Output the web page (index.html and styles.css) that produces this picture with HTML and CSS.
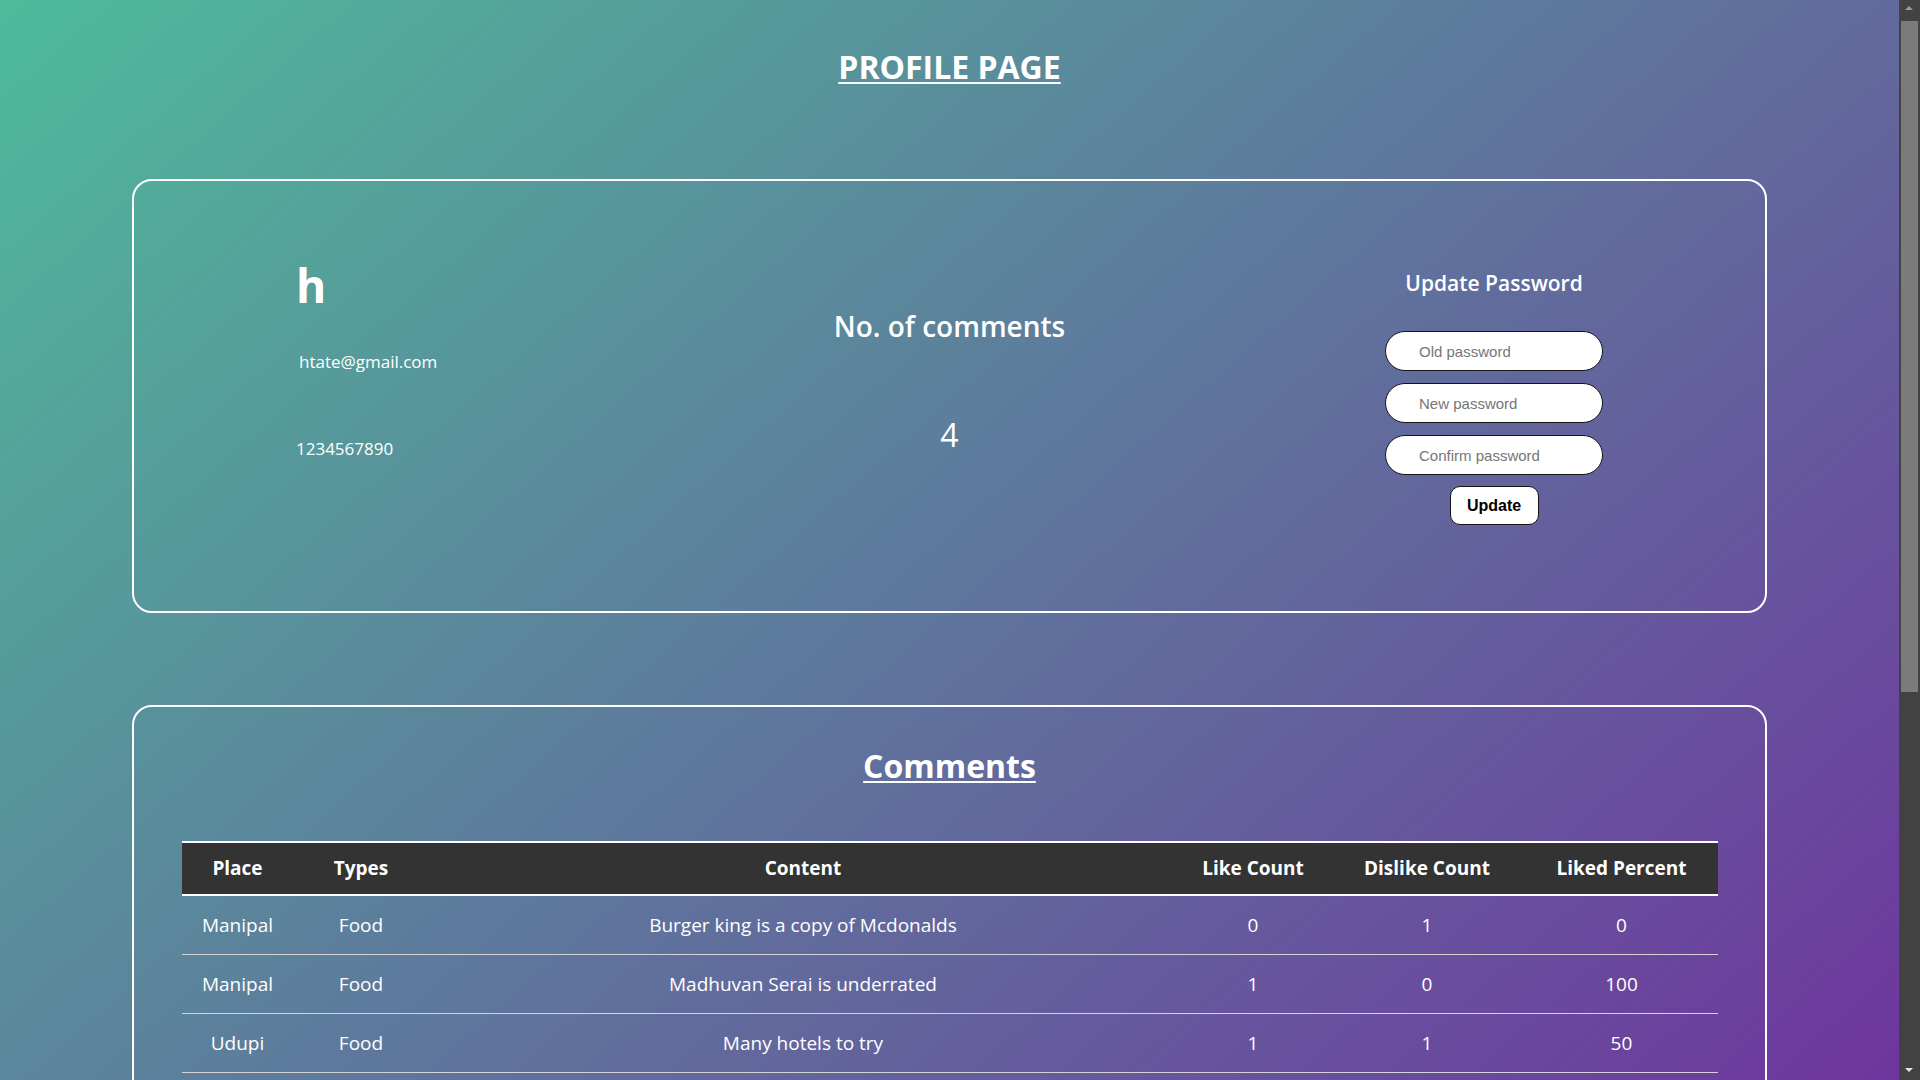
FILE: index.html
```html
<!DOCTYPE html>
<html lang="en">
<head>
<meta charset="utf-8">
<title>Profile Page</title>
<link rel="stylesheet" href="styles.css">
</head>
<body>
  <h1 class="page-title">PROFILE PAGE</h1>

  <section class="card profile-card">
    <div class="user-info">
      <h2 class="user-name">h</h2>
      <p class="user-email">htate@gmail.com</p>
      <p class="user-phone">1234567890</p>
    </div>

    <div class="stats">
      <h2 class="stats-title">No. of comments</h2>
      <p class="stats-count">4</p>
    </div>

    <form class="pw-form">
      <h3 class="pw-title">Update Password</h3>
      <input class="pw-input first" type="password" placeholder="Old password">
      <input class="pw-input" type="password" placeholder="New password">
      <input class="pw-input" type="password" placeholder="Confirm password">
      <button class="pw-button" type="button">Update</button>
    </form>
  </section>

  <section class="card comments-card">
    <h2 class="section-title">Comments</h2>
    <table class="comments-table">
      <colgroup>
        <col class="c-place">
        <col class="c-types">
        <col class="c-content">
        <col class="c-like">
        <col class="c-dislike">
        <col class="c-percent">
      </colgroup>
      <thead>
        <tr>
          <th>Place</th>
          <th>Types</th>
          <th>Content</th>
          <th>Like Count</th>
          <th>Dislike Count</th>
          <th>Liked Percent</th>
        </tr>
      </thead>
      <tbody>
        <tr>
          <td>Manipal</td>
          <td>Food</td>
          <td>Burger king is a copy of Mcdonalds</td>
          <td>0</td>
          <td>1</td>
          <td>0</td>
        </tr>
        <tr>
          <td>Manipal</td>
          <td>Food</td>
          <td>Madhuvan Serai is underrated</td>
          <td>1</td>
          <td>0</td>
          <td>100</td>
        </tr>
        <tr>
          <td>Udupi</td>
          <td>Food</td>
          <td>Many hotels to try</td>
          <td>1</td>
          <td>1</td>
          <td>50</td>
        </tr>
      </tbody>
    </table>
  </section>

  <div class="scrollbar" aria-hidden="true">
    <span class="sb-arrow sb-up"></span>
    <span class="sb-thumb"></span>
    <span class="sb-arrow sb-down"></span>
  </div>
</body>
</html>
```

FILE: styles.css
```css
:root {
  color-scheme: dark;
}

html {
  min-height: 100%;
  margin-right: 21px;
  background: linear-gradient(to bottom right, #4ebb9a, #75199f);
}

body {
  margin: 0;
  padding: 47px 0 92px;
  font-family: "Open Sans", "Noto Sans", sans-serif;
  color: #ffffff;
}

.page-title {
  margin: 0;
  font-size: 32px;
  line-height: 40px;
  font-weight: 700;
  text-align: center;
  text-decoration: underline;
  text-decoration-thickness: 2px;
  text-underline-offset: 3px;
}

.card {
  box-sizing: border-box;
  width: 86.1%;
  margin: 92px auto 0;
  border: 2px solid #ffffff;
  border-radius: 20px;
}

/* ---------- profile card ---------- */
.profile-card {
  display: grid;
  grid-template-columns: 1fr 1fr 1fr;
  align-items: start;
  padding: 76px 162px 86px;
}

.user-info {
  justify-self: start;
}

.user-name {
  margin: 0;
  font-size: 46px;
  line-height: 56px;
  font-weight: 700;
}

.user-email {
  margin: 37px 0 0;
  padding-left: 3px;
  font-size: 17px;
  line-height: 24px;
}

.user-phone {
  margin: 63px 0 0;
  font-size: 17px;
  line-height: 24px;
}

.stats {
  justify-self: center;
  padding-top: 51px;
  text-align: center;
}

.stats-title {
  margin: 0;
  font-size: 28px;
  line-height: 36px;
  font-weight: 600;
}

.stats-count {
  margin: 71px 0 0;
  font-size: 32px;
  line-height: 40px;
  font-weight: 400;
}

.pw-form {
  justify-self: end;
  width: 218px;
  padding-top: 11px;
  margin: 0;
  display: flex;
  flex-direction: column;
  align-items: center;
}

.pw-title {
  margin: 0;
  font-size: 21px;
  line-height: 30px;
  font-weight: 600;
  white-space: nowrap;
}

.pw-input {
  box-sizing: border-box;
  width: 218px;
  height: 40px;
  margin: 12px 0 0;
  padding: 0 10px 0 33px;
  border: 1.5px solid #151515;
  border-radius: 20px;
  background: #ffffff;
  color: #000000;
  font-family: "Liberation Sans", Arial, sans-serif;
  font-size: 15px;
  outline: none;
}

.pw-input.first {
  margin-top: 33px;
}

.pw-input::placeholder {
  color: #767676;
  opacity: 1;
}

.pw-button {
  box-sizing: border-box;
  width: 89px;
  height: 39px;
  margin-top: 11px;
  padding: 0;
  border: 1.5px solid #151515;
  border-radius: 10px;
  background: #ffffff;
  color: #000000;
  font-family: "Liberation Sans", Arial, sans-serif;
  font-size: 16px;
  font-weight: 700;
  cursor: pointer;
}

/* ---------- comments card ---------- */
.comments-card {
  min-height: 874px;
  padding: 39px 48px 48px;
}

.section-title {
  margin: 0;
  font-size: 32px;
  line-height: 40px;
  font-weight: 700;
  text-align: center;
  text-decoration: underline;
  text-decoration-thickness: 2px;
  text-underline-offset: 3px;
}

.comments-table {
  width: 100%;
  margin-top: 55px;
  table-layout: fixed;
  border-collapse: separate;
  border-spacing: 0;
}

.c-place { width: 111px; }
.c-types { width: 136px; }
.c-content { width: 748px; }
.c-like { width: 152px; }
.c-dislike { width: 196px; }
.c-percent { width: 193px; }

.comments-table th {
  padding: 13px 0;
  background: #333333;
  border-top: 2px solid #ffffff;
  border-bottom: 2px solid #ffffff;
  font-size: 19px;
  line-height: 25px;
  font-weight: 700;
  text-align: center;
}

.comments-table td {
  padding: 17px 0;
  border-bottom: 1px solid #d4d4d8;
  font-size: 19px;
  line-height: 24px;
  text-align: center;
}

/* ---------- window scrollbar ---------- */
.scrollbar {
  position: fixed;
  top: 0;
  right: 0;
  width: 21px;
  height: 100vh;
  background: #424242;
}

.sb-thumb {
  position: absolute;
  top: 21px;
  left: 2px;
  width: 17px;
  height: 671px;
  background: #7b7b7b;
}

.sb-arrow {
  position: absolute;
  left: 6px;
  width: 0;
  height: 0;
  border-left: 4.5px solid transparent;
  border-right: 4.5px solid transparent;
}

.sb-up {
  top: 6px;
  border-bottom: 4px solid #9a9a9a;
}

.sb-down {
  bottom: 8px;
  border-top: 4px solid #e6e6e6;
}
```
